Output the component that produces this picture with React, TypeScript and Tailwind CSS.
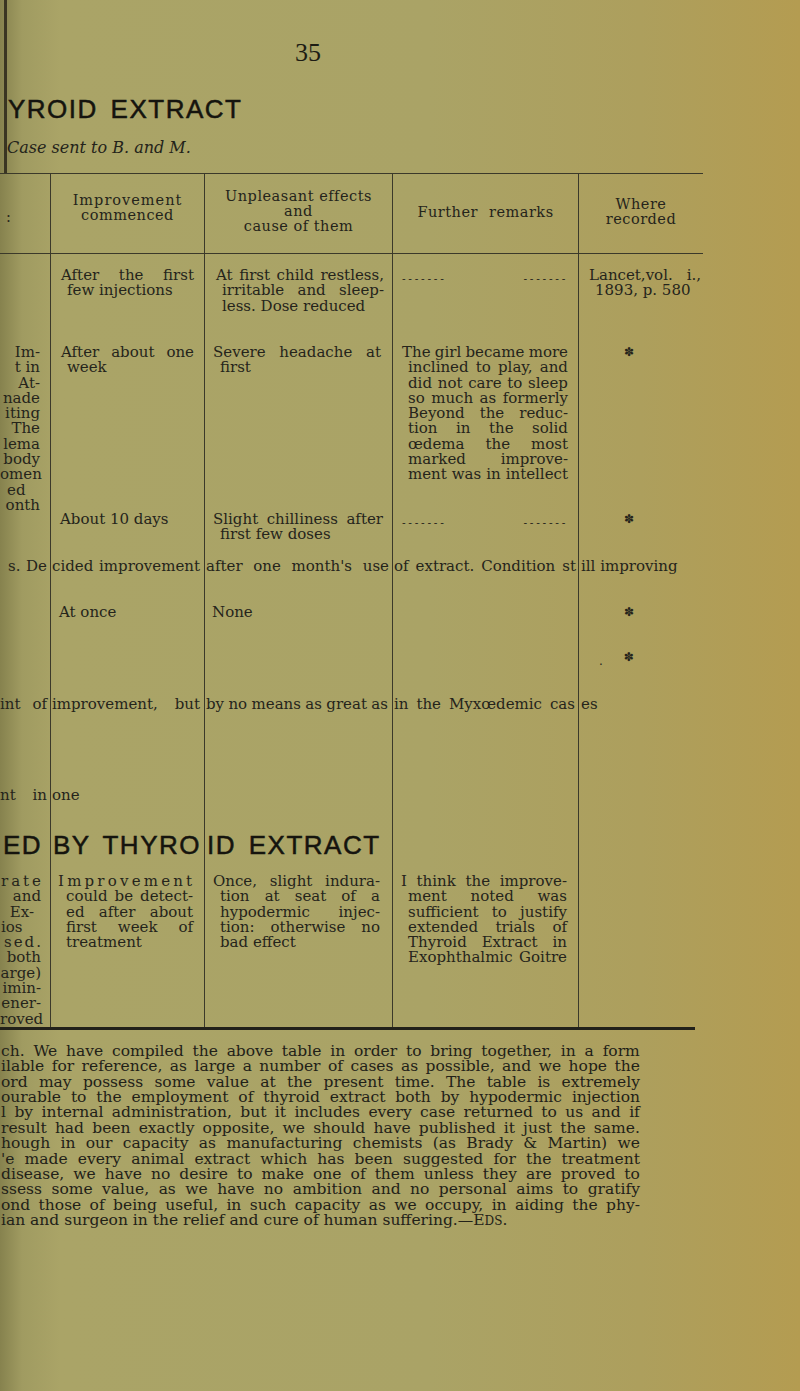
import React from 'react';

const serif = "[font-family:'DejaVu_Serif',serif]";
const sans = "[font-family:'Liberation_Sans',Arial,sans-serif]";
const cols = 'grid grid-cols-[50px_154px_188px_186px_125px]';
const caps = `text-[26px] leading-[24px] tracking-[1.5px] [word-spacing:4px] text-[#15140e] [-webkit-text-stroke:0.5px_#15140e] ${sans}`;

function Words({ text, className = '' }: { text: string; className?: string }) {
  return (
    <div className={`flex justify-between gap-x-[3px] whitespace-nowrap ${className}`}>
      {text.split(' ').map((w, i) => (
        <span key={i}>{w}</span>
      ))}
    </div>
  );
}

function Plain({ text, className = '' }: { text: string; className?: string }) {
  return <div className={`whitespace-pre ${className}`}>{text}</div>;
}

interface BlockProps {
  lines: string[];
  first: string;
  rest: string;
  pr: string;
  justifyLast?: boolean;
}

function Block({ lines, first, rest, pr, justifyLast = false }: BlockProps) {
  return (
    <div className={pr}>
      {lines.map((l, i) =>
        i < lines.length - 1 || justifyLast ? (
          <Words key={i} text={l} className={i === 0 ? first : rest} />
        ) : (
          <Plain key={i} text={l} className={i === 0 ? first : rest} />
        )
      )}
    </div>
  );
}

function Star() {
  return <div className="pl-[45px] text-[12px] [font-family:'DejaVu_Sans',sans-serif]">✽</div>;
}

function Dashes() {
  return (
    <div className="flex justify-between pl-[9px] pr-[10px] pt-[3px] text-[11px] tracking-[2.7px] [font-family:'Liberation_Sans',sans-serif]">
      <span>-------</span>
      <span>-------</span>
    </div>
  );
}

function Row({ h, pt = '', cells }: { h: string; pt?: string; cells: React.ReactNode[] }) {
  return (
    <div className={`${cols} ${h}`}>
      {cells.map((c, i) => (
        <div key={i} className={`${pt} ${i > 0 ? 'border-l border-[#3b392a]' : ''}`}>
          {c}
        </div>
      ))}
    </div>
  );
}

const paragraph = [
  'ch. We have compiled the above table in order to bring together, in a form',
  'ilable for reference, as large a number of cases as possible, and we hope the',
  'ord may possess some value at the present time. The table is extremely',
  'ourable to the employment of thyroid extract both by hypodermic injection',
  'l by internal administration, but it includes every case returned to us and if',
  'result had been exactly opposite, we should have published it just the same.',
  'hough in our capacity as manufacturing chemists (as Brady & Martin) we',
  "'e made every animal extract which has been suggested for the treatment",
  'disease, we have no desire to make one of them unless they are proved to',
  'ssess some value, as we have no ambition and no personal aims to gratify',
  'ond those of being useful, in such capacity as we occupy, in aiding the phy-',
];

export default function App() {
  return (
    <div
      className={`w-[800px] min-h-[1391px] overflow-hidden text-[#25241b] ${serif} bg-[linear-gradient(90deg,#86824e_0px,#a09b61_22px,#aaa467_60px,#aaa366_430px,#ad9f5d_640px,#b49c51_800px)]`}
    >
      {/* page head */}
      <div className="ml-[4px] border-l-[3px] border-[#3a3522] pt-[40px] pb-[15px]">
        <div className="pl-[288px] text-[26px] leading-[26px] text-[#1d1c14] [font-family:'Liberation_Serif',serif]">35</div>
        <div className={`mt-[31px] pl-[1px] ${caps}`}>YROID EXTRACT</div>
        <div className="mt-[17px] text-[16px] leading-[20px] italic text-[#24231a]">Case sent to B. and M.</div>
      </div>

      {/* table */}
      <div className="w-[703px] text-[15px] leading-[15.3px]">
        <div className={`${cols} h-[81px] border-y border-[#3b392a] text-[14.5px] leading-[15px] tracking-[0.5px]`}>
          <div className="pt-[36px] pl-[6px]">:</div>
          <div className="border-l border-[#3b392a] flex flex-col items-center justify-center pb-[11px]">
            <div className="tracking-[1px]">Improvement</div>
            <div>commenced</div>
          </div>
          <div className="border-l border-[#3b392a] flex flex-col items-center justify-center pb-[5px]">
            <div>Unpleasant effects</div>
            <div>and</div>
            <div>cause of them</div>
          </div>
          <div className="border-l border-[#3b392a] flex flex-col items-center justify-center pb-[3px]">
            <div className="[word-spacing:6px]">Further remarks</div>
          </div>
          <div className="border-l border-[#3b392a] flex flex-col items-center justify-center pb-[3px]">
            <div>Where</div>
            <div>recorded</div>
          </div>
        </div>

        <Row
          h="h-[91px]"
          pt="pt-[14px]"
          cells={[
            null,
            <Block lines={['After the first', 'few injections']} first="pl-[10px]" rest="pl-[16px]" pr="pr-[10px]" />,
            <Block
              lines={['At first child restless,', 'irritable and sleep-', 'less. Dose reduced']}
              first="pl-[11px]"
              rest="pl-[17px]"
              pr="pr-[8px]"
            />,
            <Dashes />,
            <Block lines={['Lancet,vol. i.,', '1893, p. 580']} first="pl-[10px]" rest="pl-[16px]" pr="pr-[2px]" />,
          ]}
        />

        <Row
          h="h-[167px]"
          cells={[
            <div className="pr-[10px] text-right">
              {['Im-', 't in', 'At-', 'nade', 'iting', 'The', 'lema', 'body', 'omen'].map((t, i) => (
                <div key={i} className="whitespace-nowrap">{t}</div>
              ))}
              <div className="text-left pl-[7px]">ed</div>
              <div>onth</div>
            </div>,
            <Block lines={['After about one', 'week']} first="pl-[10px]" rest="pl-[16px]" pr="pr-[10px]" />,
            <Block lines={['Severe headache at', 'first']} first="pl-[8px]" rest="pl-[15px]" pr="pr-[11px]" />,
            <Block
              lines={[
                'The girl became more',
                'inclined to play, and',
                'did not care to sleep',
                'so much as formerly',
                'Beyond the reduc-',
                'tion in the solid',
                'œdema the most',
                'marked improve-',
                'ment was in intellect',
              ]}
              first="pl-[9px]"
              rest="pl-[15px]"
              pr="pr-[10px]"
              justifyLast
            />,
            <Star />,
          ]}
        />

        <Row
          h="h-[47px]"
          cells={[
            null,
            <Plain text="About 10 days" className="pl-[9px]" />,
            <Block lines={['Slight chilliness after', 'first few doses']} first="pl-[8px]" rest="pl-[15px]" pr="pr-[9px]" />,
            <Dashes />,
            <Star />,
          ]}
        />

        <Row
          h="h-[46px]"
          cells={[
            <Words text="s. De" className="pl-[8px] pr-[3px]" />,
            <Words text="cided improvement" className="pl-[1px] pr-[4px]" />,
            <Words text="after one month's use" className="pl-[1px] pr-[3px]" />,
            <Words text="of extract. Condition st" className="pl-[1px] pr-[2px]" />,
            <Plain text="ill improving" className="pl-[2px]" />,
          ]}
        />

        <Row
          h="h-[45px]"
          cells={[null, <Plain text="At once" className="pl-[8px]" />, <Plain text="None" className="pl-[7px]" />, null, <Star />]}
        />

        <Row
          h="h-[47px]"
          cells={[
            null,
            null,
            null,
            null,
            <div className="flex pl-[20px] text-[12px] [font-family:'DejaVu_Sans',sans-serif]">
              <span className="pt-[4px]">.</span>
              <span className="ml-[21px]">✽</span>
            </div>,
          ]}
        />

        <Row
          h="h-[91px]"
          cells={[
            <Words text="int of" className="pr-[3px]" />,
            <Words text="improvement, but" className="pl-[1px] pr-[4px]" />,
            <Words text="by no means as great as" className="pl-[1px] pr-[4px]" />,
            <Words text="in the Myxœdemic cas" className="pl-[1px] pr-[3px]" />,
            <Plain text="es" className="pl-[2px]" />,
          ]}
        />

        <Row
          h="h-[45px]"
          cells={[<Words text="nt in" className="pr-[3px]" />, <Plain text="one" className="pl-[1px]" />, null, null, null]}
        />

        <Row
          h="h-[41px]"
          cells={[
            <div className={`pr-[8px] text-right ${caps}`}>ED</div>,
            <div className={`pl-[2px] whitespace-nowrap ${caps}`}>BY THYRO</div>,
            <div className={`pl-[2px] whitespace-nowrap ${caps}`}>ID EXTRACT</div>,
            null,
            null,
          ]}
        />

        <Row
          h="h-[153px]"
          cells={[
            <div className="pr-[9px] text-right">
              <div className="tracking-[3px] -mr-[3px]">rate</div>
              <div>and</div>
              <div className="pr-[7px]">Ex-</div>
              <div className="text-left pl-[1px]">ios</div>
              <div className="tracking-[2px] -mr-[2px]">sed.</div>
              <div>both</div>
              <div>arge)</div>
              <div>imin-</div>
              <div>ener-</div>
              <div>roved</div>
            </div>,
            <div className="pr-[11px]">
              <div className="pl-[7px] tracking-[3.2px] whitespace-nowrap">Improvement</div>
              <Words text="could be detect-" className="pl-[15px]" />
              <Words text="ed after about" className="pl-[15px]" />
              <Words text="first week of" className="pl-[15px]" />
              <Plain text="treatment" className="pl-[15px]" />
            </div>,
            <Block
              lines={['Once, slight indura-', 'tion at seat of a', 'hypodermic injec-', 'tion: otherwise no', 'bad effect']}
              first="pl-[8px]"
              rest="pl-[15px]"
              pr="pr-[12px]"
            />,
            <Block
              lines={[
                'I think the improve-',
                'ment noted was',
                'sufficient to justify',
                'extended trials of',
                'Thyroid Extract in',
                'Exophthalmic Goitre',
              ]}
              first="pl-[8px]"
              rest="pl-[15px]"
              pr="pr-[11px]"
              justifyLast
            />,
            null,
          ]}
        />
      </div>
      <div className="w-[695px] h-[3px] bg-[#22211a]" />

      {/* editors' note */}
      <div className="mt-[14px] w-[640px] pl-[1px] text-[15.5px] leading-[15.36px] text-[#222118]">
        {paragraph.map((l, i) => (
          <Words key={i} text={l} />
        ))}
        <div className="whitespace-nowrap">
          ian and surgeon in the relief and cure of human suffering.—E<span className="text-[12px]">DS</span>.
        </div>
      </div>
    </div>
  );
}
